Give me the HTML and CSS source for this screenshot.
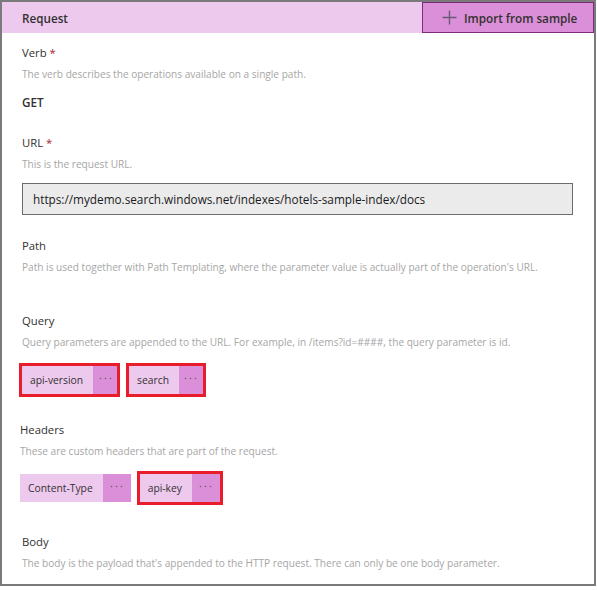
FILE: index.html
```html
<!DOCTYPE html>
<html lang="en">
<head>
<meta charset="utf-8">
<title>Request</title>
<link rel="stylesheet" href="styles.css">
</head>
<body>
<div class="panel">
  <div class="panel-header">
    <span class="panel-title">Request</span>
    <button class="import-btn" type="button">
      <svg class="plus-icon" width="15" height="15" viewBox="0 0 15 15" aria-hidden="true"><path d="M7.5 0.5V14.5M0.5 7.5H14.5" /></svg>
      <span>Import from sample</span>
    </button>
  </div>
  <div class="panel-body">
    <section class="field">
      <div class="field-label">Verb <span class="req">*</span></div>
      <div class="field-desc">The verb describes the operations available on a single path.</div>
      <div class="field-value">GET</div>
    </section>

    <section class="field field--url">
      <div class="field-label">URL <span class="req">*</span></div>
      <div class="field-desc">This is the request URL.</div>
      <div class="url-input">https://mydemo.search.windows.net/indexes/hotels-sample-index/docs</div>
    </section>

    <section class="field field--path">
      <div class="field-label">Path</div>
      <div class="field-desc">Path is used together with Path Templating, where the parameter value is actually part of the operation's URL.</div>
    </section>

    <section class="field field--query">
      <div class="field-label">Query</div>
      <div class="field-desc">Query parameters are appended to the URL. For example, in /items?id=####, the query parameter is id.</div>
      <div class="chips chips--query">
        <div class="chip chip--marked"><span class="chip-name">api-version</span><span class="chip-more"><svg width="13" height="3" viewBox="0 0 13 3"><circle cx="1.5" cy="1.5" r="0.8"/><circle cx="6.5" cy="1.5" r="0.8"/><circle cx="11.5" cy="1.5" r="0.8"/></svg></span></div>
        <div class="chip chip--marked"><span class="chip-name">search</span><span class="chip-more"><svg width="13" height="3" viewBox="0 0 13 3"><circle cx="1.5" cy="1.5" r="0.8"/><circle cx="6.5" cy="1.5" r="0.8"/><circle cx="11.5" cy="1.5" r="0.8"/></svg></span></div>
      </div>
    </section>

    <section class="field field--headers">
      <div class="field-label">Headers</div>
      <div class="field-desc">These are custom headers that are part of the request.</div>
      <div class="chips chips--headers">
        <div class="chip"><span class="chip-name">Content-Type</span><span class="chip-more chip-more--wide"><svg width="13" height="3" viewBox="0 0 13 3"><circle cx="1.5" cy="1.5" r="0.8"/><circle cx="6.5" cy="1.5" r="0.8"/><circle cx="11.5" cy="1.5" r="0.8"/></svg></span></div>
        <div class="chip chip--marked"><span class="chip-name">api-key</span><span class="chip-more chip-more--wide"><svg width="13" height="3" viewBox="0 0 13 3"><circle cx="1.5" cy="1.5" r="0.8"/><circle cx="6.5" cy="1.5" r="0.8"/><circle cx="11.5" cy="1.5" r="0.8"/></svg></span></div>
      </div>
    </section>

    <section class="field field--body">
      <div class="field-label">Body</div>
      <div class="field-desc">The body is the payload that's appended to the HTTP request. There can only be one body parameter.</div>
    </section>
  </div>
</div>
</body>
</html>
```

FILE: styles.css
```css
* { box-sizing: border-box; }

html, body {
  margin: 0;
  padding: 0;
  background: #ffffff;
}

body {
  font-family: "Open Sans", "Noto Sans", sans-serif;
  color: #323130;
}

.panel {
  width: 596px;
  height: 586px;
  border: 2px solid #7a7a7a;
  background: #ffffff;
  overflow: hidden;
}

.panel-header {
  display: flex;
  align-items: stretch;
  justify-content: space-between;
  height: 31px;
  background: #eec9ee;
}

.panel-title {
  display: flex;
  align-items: center;
  padding-left: 20px;
  font-size: 11.7px;
  font-weight: 600;
  color: #323130;
}

.import-btn {
  display: flex;
  align-items: center;
  gap: 7px;
  width: 172px;
  margin: 0;
  padding: 0 0 0 19px;
  border: 1px solid #7b2d7b;
  background: #da8fd8;
  font-family: inherit;
  font-size: 11.7px;
  font-weight: 600;
  color: #323130;
}

.plus-icon path {
  fill: none;
  stroke: #6a5a78;
  stroke-width: 1.4;
}

.panel-body {
  padding: 12px 0 0 20px;
}

.field {
  display: flex;
  flex-direction: column;
  align-items: flex-start;
}

.field--url { margin-top: 25px; }
.field--path { margin-top: 23px; }
.field--query { margin-top: 38px; }
.field--headers { margin-top: 28px; margin-left: -2px; }
.field--body { margin-top: 32px; }

.field-label {
  font-size: 11.3px;
  line-height: 16px;
  color: #323130;
  margin-bottom: 5px;
}

.req {
  color: #a4262c;
}

.field-desc {
  font-size: 10.1px;
  line-height: 16px;
  color: #a6a6a6;
}

.field-value {
  margin-top: 12px;
  font-size: 11.7px;
  line-height: 16px;
  font-weight: 600;
  color: #323130;
}

.url-input {
  margin-top: 11px;
  width: 551px;
  height: 32px;
  padding: 0 0 0 10px;
  display: flex;
  align-items: center;
  border: 1px solid #6b6b6b;
  background: #ebebeb;
  font-size: 11.75px;
  color: #1b1b1b;
}

.chips {
  display: flex;
  align-items: center;
}

.chips--query {
  margin-top: 16px;
  gap: 12px;
}

.chips--headers {
  margin-top: 15px;
  gap: 9px;
}

.chip {
  display: flex;
  height: 28px;
  background: #eec9ee;
}

.chip--marked {
  outline: 3px solid #e81c2a;
}

.chip-name {
  display: flex;
  align-items: center;
  padding: 0 10px 0 8px;
  font-size: 10.3px;
  color: #323130;
}

.chip-more {
  display: flex;
  align-items: center;
  justify-content: center;
  width: 24px;
  background: #da8fd8;
  padding-bottom: 3px;
}

.chip-more--wide {
  width: 28px;
}

.chip-more circle {
  fill: #6e6070;
}
```
